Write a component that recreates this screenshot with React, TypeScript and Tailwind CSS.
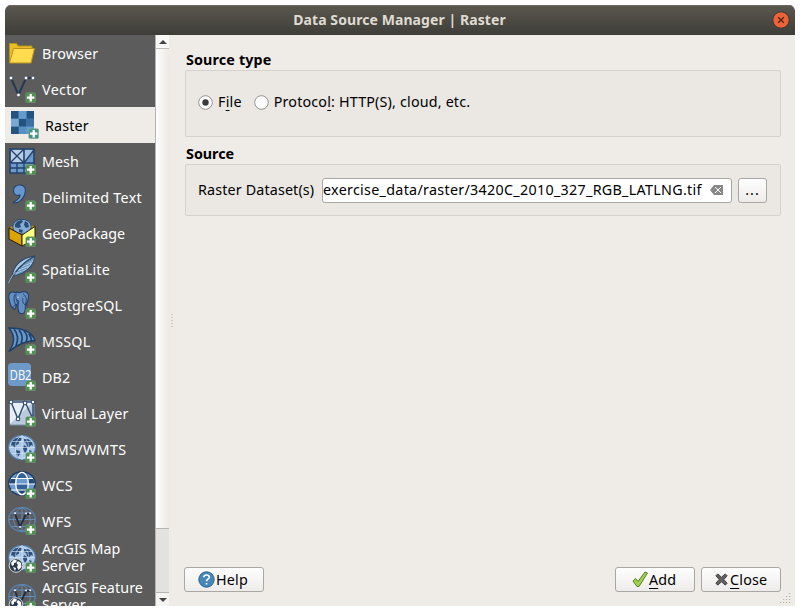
import type { ReactNode } from "react";

const NAVY = "#24426a";
const BLUE = "#6d9ace";
const LIGHT = "#b9cfe8";

function Plus({ fill = "#4f8f50" }: { fill?: string }) {
  return (
    <g>
      <rect x="17.8" y="17.8" width="9.8" height="9.8" rx="1.5" fill={fill} stroke="#76a877" strokeWidth=".5" />
      <path d="M22.7 19v7.4M19 22.7h7.4" stroke="#fff" strokeWidth="2.3" />
    </g>
  );
}

function Icon({ children, plus = true }: { children: ReactNode; plus?: boolean }) {
  return (
    <svg width="28" height="28" viewBox="0 0 28 28" fill="none" className="shrink-0">
      {children}
      {plus && <Plus />}
    </svg>
  );
}

function MapGlobe() {
  return (
    <g>
      <ellipse cx="14" cy="12.5" rx="13.4" ry="12.2" fill="#a9c6e6" stroke="#4e7ba9" strokeWidth="1.2" />
      <path d="M4 6l3-2.500 4-1 3 1-1 2-2 1 0 2-3 2-1 3-2-3-2 0zM16 4l4 0 4 3 1 4-2-1-2 3-2-2-1-3-2-1zM8 15l4 1 0 3-2 3-2-3zM16 10l3 2 0 3-2 3-2-4zM21 15l3 1-2 2z" fill="#2e527d" />
      <path d="M1 12.500h26M4 6.500h20M4 18.500h20M14 0.500v24M14 .5C5 6 5 19 14 24.500M14 .5c9 5.500 9 18.500 0 24" stroke="#dce9f6" strokeWidth=".6" />
    </g>
  );
}

function FeatureGlobe() {
  return (
    <g>
      <ellipse cx="14" cy="12.500" rx="13.2" ry="12" stroke="#557fb0" strokeWidth="1.5" />
      <path d="M1 12.500h26M4 6h20M4 19.500h20M14 0.500v24M14 .5C3 6 3 19 14 24.500M14 .5c11 5.500 11 18.500 0 24" stroke="#648bb9" strokeWidth="1" />
      <path d="M7 7l5 13 6-13h4" stroke="#1e2e46" strokeWidth="1.8" />
      <path d="M7 6.2h.1M12 20h.1M18 6.5h.1M22 6.2h.1" stroke="#e8eef5" strokeWidth="2" strokeLinecap="round" />
    </g>
  );
}

function SmallWorld() {
  return (
    <g>
      <circle cx="8" cy="20.5" r="6.8" fill="#29394e" stroke="#d5d8dc" strokeWidth="1" />
      <path d="M3 18l3-3.500 3 1-1 2-2 .5 0 2-2 1zM10 16l3 2 .5 4-3 3-1.500-3 1-2-1.500-2zM5 22l3 1-1 3z" fill="#fff" />
    </g>
  );
}

const icons = {
  browser: (
    <Icon plus={false}>
      <path d="M1.5 24V4.5h7l1.500 2.500h14V10" fill="#e8bd25" stroke="#b8921c" />
      <path d="M1.5 24L5.5 9.500h21L23 24z" fill="#ffdb4d" stroke="#b8921c" />
    </Icon>
  ),
  vector: (
    <Icon>
      <path d="M3 3l7.500 17L18 3h7" stroke="#253956" strokeWidth="2" />
      {[[3, 3], [10.5, 20], [18, 3], [25, 3]].map(([x, y]) => (
        <circle key={x} cx={x} cy={y} r="1.8" fill="#fff" stroke="#42536b" strokeWidth=".7" />
      ))}
    </Icon>
  ),
  raster: (
    <Icon plus={false}>
      <path d="M0 0h23v23H0z" fill="#5790c3" />
      <path d="M0 0h7.7v7.7H0zM15.400 0H23v7.7h-7.600zM7.700 7.700h7.700v7.700H7.700zM0 15.400h7.700V23H0z" fill="#24537f" />
      <path d="M7.700 0h7.700v7.700H7.700zM15.400 15.400H23V23h-7.600z" fill="#639dd0" />
      <path d="M0 7.700h7.700v7.700H0z" fill="#78a8d3" />
      <path d="M15.400 7.700H23v7.700h-7.600z" fill="#3d6fa0" />
      <Plus fill="#48918a" />
    </Icon>
  ),
  mesh: (
    <Icon>
      <path d="M2 2h24v24H2z" fill={BLUE} stroke={NAVY} strokeWidth="1.6" />
      <path d="M3 3h12v12H3z" fill={LIGHT} />
      <path d="M17 15V3h8z" fill="#a3c0df" />
      <path d="M2 2l14 14M16 2L2 16M16 2v24M2 16h24M2 21h24M9 16v10M16 16L26 3" stroke={NAVY} strokeWidth="1.4" />
    </Icon>
  ),
  comma: (
    <Icon>
      <path d="M5.500 7.500c0-3.500 3-5.500 6-5.500 6 0 7 5 5 10-2 4.500-6 8-10 8-2 0-1-1 1-2 3-2 4.500-4 4.500-6-4 1.500-6.500-1-6.500-4.500z" fill="#6596ce" stroke={NAVY} strokeWidth="1.1" />
    </Icon>
  ),
  geopackage: (
    <Icon>
      <path d="M1 8.500L8 5l6 3 6-3 7 2.500-13 9z" fill="#c79a10" stroke="#6b560b" strokeWidth=".7" />
      <ellipse cx="14" cy="7.700" rx="9.200" ry="7.400" fill="#86acd5" stroke="#284b76" />
      <path d="M7 5l3-3 4-1 1 2-3 2 1 3-3 1-3-1zM17 2l3 2 1 4-3 1-2-3zM11 10l4 1-1 3-3-1z" fill="#294c75" />
      <path d="M1 9l13 7v11L1 20z" fill="#dca400" stroke="#231d0b" />
      <path d="M14 16L27 7.500V20l-13 7z" fill="#ffff83" stroke="#231d0b" />
    </Icon>
  ),
  feather: (
    <Icon>
      <path d="M4 21C6 10 14 3 26.500 1c0 7-5 13-12 17-4 2-7 3-10.500 3z" fill="#a9c8e7" stroke="#284966" strokeWidth="1.1" />
      <path d="M.5 28C6 17 13 9 26 1.500" stroke="#284966" strokeWidth="1.500" />
      <path d="M7 20l9-4M9 17l10-4M12 13.500l10-4M15 10l9-3.500M19 7l6-2.500" stroke="#4e7ba2" strokeWidth=".8" />
      <path d="M.5 28c2.500-5 4-8 7-11" stroke="#c2d4e4" strokeWidth=".8" />
    </Icon>
  ),
  postgres: (
    <Icon>
      <g transform="scale(.83 .9)">
        <path d="M9 2C4-1 0 3 1 8c1 5 3 11 6 12 2 1 3-3 3-5l2 1c0 5 0 8 3 9 4 1 6-1 6-9 2-3 5-9 3-13-2-3-7-3-10-1-2-1-4-1-5 0z" fill="#648fc4" stroke="#24426a" strokeWidth="1.3" />
        <path d="M8 4c-2 4 0 8 1 12M12 15c-1-4-4-8-2-12M20 15c3-3 3-9-2-12M10 10l3 1-1 5M20 15c-3-2-3-6-1-9M4 17c2 2 4 0 5-2M20 15l4 1" stroke="#24426a" strokeWidth="1.1" />
        <path d="M11 7h2M18 7h1" stroke="#c5dcf2" />
      </g>
    </Icon>
  ),
  mssql: (
    <Icon>
      <path d="M1 1c14 0 23 4 26 12.500-9 1-16 3-26 11C7 16 7 8 1 1z" fill="#6796c9" stroke="#20416a" strokeWidth="1.5" />
      <path d="M6 2c5 6 4 12 2 17M11 3c4 5 4 9 2 13M16 4c4 4 4 7 2 11M21 7c2 3 3 5 2 7" stroke="#20416a" strokeWidth="1.7" />
      <path d="M1 24.500c10-8 16-10 26-11" stroke="#20416a" strokeWidth="1.6" />
    </Icon>
  ),
  db2: (
    <Icon>
      <rect width="23" height="23" rx="4" fill="#6d9ac9" />
      <text transform="translate(1.8 16.800) scale(.77 1)" fill="#fff" fontFamily="Open Sans, sans-serif" fontSize="14.5">DB2</text>
    </Icon>
  ),
  virtual: (
    <Icon>
      <path d="M2 2h24v24H2z" fill="#b9cadd" stroke="#7891ac" />
      <path d="M2 2h24L2 25z" fill="#e5edf5" />
      <path d="M3 3l7 17 7-17 8 17M3 3h22v18" stroke="#344f70" strokeWidth="1.500" />
      <path d="M3 3h.1M10 20h.1M17 4h.1M25 3h.1" stroke="#304b69" strokeWidth="4.600" strokeLinecap="round" />
      <path d="M3 3h.1M10 20h.1M17 4h.1M25 3h.1" stroke="#fff" strokeWidth="2.400" strokeLinecap="round" />
    </Icon>
  ),
  wms: <Icon><MapGlobe /></Icon>,
  wcs: (
    <Icon>
      <ellipse cx="14" cy="12.500" rx="13.200" ry="11.700" fill="#6d9acc" stroke="#1f3c60" strokeWidth="1.5" />
      <path d="M9 2h10l2 5H7zM8 13h12l-1 6H9z" fill="#34619a" />
      <path d="M3 7h5l-1 6H1.500zM20 7h5l1.500 6H21zM10 19h8l-4 5z" fill="#244b78" />
      <path d="M3 7.500h22M1 13h26M3 19h22" stroke="#fff" strokeWidth="1.200" />
      <ellipse cx="14" cy="12.500" rx="6.300" ry="11.200" stroke="#fff" strokeWidth="1.300" />
    </Icon>
  ),
  wfs: <Icon><FeatureGlobe /></Icon>,
  arcmap: <Icon><MapGlobe /><SmallWorld /></Icon>,
  arcfeature: <Icon><FeatureGlobe /><SmallWorld /></Icon>,
};

type Source = { label: string; icon: ReactNode; selected?: boolean; tracking: string };

const sources: Source[] = [
  { label: "Browser", icon: icons.browser, tracking: "tracking-[0.15px]" },
  { label: "Vector", icon: icons.vector, tracking: "tracking-[0.35px]" },
  { label: "Raster", icon: icons.raster, selected: true, tracking: "tracking-[0.15px]" },
  { label: "Mesh", icon: icons.mesh, tracking: "tracking-normal" },
  { label: "Delimited Text", icon: icons.comma, tracking: "tracking-[0.27px]" },
  { label: "GeoPackage", icon: icons.geopackage, tracking: "tracking-normal" },
  { label: "SpatiaLite", icon: icons.feather, tracking: "tracking-[0.2px]" },
  { label: "PostgreSQL", icon: icons.postgres, tracking: "tracking-[0.2px]" },
  { label: "MSSQL", icon: icons.mssql, tracking: "tracking-[0.2px]" },
  { label: "DB2", icon: icons.db2, tracking: "tracking-[0.1px]" },
  { label: "Virtual Layer", icon: icons.virtual, tracking: "tracking-[0.17px]" },
  { label: "WMS/WMTS", icon: icons.wms, tracking: "tracking-[0.37px]" },
  { label: "WCS", icon: icons.wcs, tracking: "tracking-[0.3px]" },
  { label: "WFS", icon: icons.wfs, tracking: "tracking-[0.4px]" },
];

const arcSources: Source[] = [
  { label: "ArcGIS Map", icon: icons.arcmap, tracking: "tracking-normal" },
  { label: "ArcGIS Feature", icon: icons.arcfeature, tracking: "tracking-[0.1px]" },
];

function Sidebar() {
  return (
    <nav className="w-[150px] shrink-0 overflow-hidden bg-[#5c5c5c] text-white">
      {sources.map((s) => (
        <div key={s.label} className={s.selected ? "flex h-9 items-center gap-1.5 bg-[#efebe7] pl-1.5 text-black" : "flex h-9 items-center gap-1.5 pl-[3px]"}>
          {s.icon}
          <span className={`whitespace-nowrap pt-0.5 leading-5 ${s.tracking}`}>{s.label}</span>
        </div>
      ))}
      {arcSources.map((s) => (
        <div key={s.label} className="flex h-[39px] items-center gap-1.5 pl-[3px]">
          {s.icon}
          <span className={`whitespace-nowrap pb-1 leading-[17px] ${s.tracking}`}>{s.label}<br />Server</span>
        </div>
      ))}
    </nav>
  );
}

function Scrollbar() {
  return (
    <div className="flex w-3.5 shrink-0 flex-col border-l border-[#b6b3b0] bg-[#e4e2e0]">
      <div className="flex h-3.5 items-center justify-center border-b border-[#bebbb8] bg-[#faf9f8]">
        <svg width="8" height="4"><path d="M4 0l4 4H0z" fill="#444" /></svg>
      </div>
      <div className="h-[480px] border-b border-[#b6b3b0] bg-linear-to-r from-[#fefefe] to-[#ece9e6]" />
      <div className="flex-1" />
      <div className="flex h-3.5 items-center justify-center border-t border-[#b6b3b0] bg-[#f5f4f2]">
        <svg width="8" height="4"><path d="M0 0h8L4 4z" fill="#444" /></svg>
      </div>
    </div>
  );
}

const buttonStyle = "flex items-center rounded-[3px] border border-[#aaa6a2] bg-linear-to-b from-[#fefefe] to-[#eeecea]";

function Mnemonic({ children }: { children: string }) {
  return <span className="underline decoration-1 underline-offset-[3px]">{children}</span>;
}

function ResizeGrip() {
  return (
    <svg width="11" height="11" className="absolute bottom-0.5 right-1">
      <path d="M9 0h1.200M6 3h1.200M9 3h1.200M3 6h1.200M6 6h1.200M9 6h1.200M0 9h1.200M3 9h1.200M6 9h1.200M9 9h1.200" transform="translate(0 .5)" stroke="#b5b1ad" />
    </svg>
  );
}

export default function App() {
  return (
    <div className="h-[615px] w-[804px] bg-white pl-[5px] pt-[5px] font-['Noto_Sans',sans-serif] text-[14.3px] text-black">
      <div className="relative flex h-[601px] w-[790px] flex-col overflow-hidden rounded-t-[6px] bg-[#efebe7]">
        <header className="flex h-[30px] shrink-0 items-center bg-linear-to-b from-[#5b584f] to-[#3e3d38] pl-[22px] pr-[5px] shadow-[inset_0_1px_#6b685e]">
          <h1 className="flex-1 whitespace-nowrap text-center text-[14px] font-bold leading-5 tracking-[0.08px] text-[#dfdbd2]">Data Source Manager | Raster</h1>
          <svg width="18" height="18" viewBox="0 0 18 18" className="shrink-0">
            <circle cx="9" cy="9" r="8.2" fill="#ed6338" stroke="#3d3831" />
            <path d="M6.2 6.2l5.6 5.6M11.8 6.2l-5.6 5.6" stroke="#4b281b" strokeWidth="1.4" />
          </svg>
        </header>
        <div className="flex min-h-0 flex-1">
          <Sidebar />
          <Scrollbar />
          <div className="flex w-[5px] shrink-0 items-center justify-center">
            <svg width="2" height="16"><path d="M1 1v15" stroke="#aaa7a3" strokeDasharray="1 2" /></svg>
          </div>
          <main className="flex min-w-0 flex-1 flex-col pl-[11px]">
            <h2 className="mt-[15px] h-5 whitespace-nowrap pl-px font-bold leading-5 tracking-[0.15px]">Source type</h2>
            <section className="flex h-[67px] w-[596px] items-center rounded-xs border border-[#d5d1cd] bg-[#ebe7e3] pb-[3px] pl-3">
              <svg width="15" height="15" viewBox="0 0 15 15"><circle cx="7.5" cy="7.5" r="6.8" fill="#fff" stroke="#96928e" /><circle cx="7.5" cy="7.5" r="3.2" fill="#3c3c3c" /></svg>
              <span className="ml-[5px] whitespace-nowrap leading-5 tracking-[0.2px]">F<Mnemonic>i</Mnemonic>le</span>
              <svg width="15" height="15" viewBox="0 0 15 15" className="ml-3"><circle cx="7.5" cy="7.5" r="6.8" fill="#fff" stroke="#96928e" /></svg>
              <span className="ml-[5px] whitespace-nowrap leading-5 tracking-[0.18px]">Protoco<Mnemonic>l</Mnemonic>: HTTP(S), cloud, etc.</span>
            </section>
            <h2 className="mt-[7px] h-5 whitespace-nowrap pl-px font-bold leading-5">Source</h2>
            <section className="flex h-[52px] w-[596px] items-center rounded-xs border border-[#d5d1cd] bg-[#ebe7e3] pl-3">
              <span className="w-[124px] shrink-0 whitespace-nowrap leading-5 tracking-[0.15px]">Raster Dataset(s)</span>
              <div className="flex h-[25px] w-[410px] shrink-0 items-center rounded-[3px] border border-[#aaa6a2] bg-white">
                <span className="w-[387px] whitespace-nowrap leading-5 tracking-[0.3px]">exercise_data/raster/3420C_2010_327_RGB_LATLNG.tif</span>
                <svg width="14" height="10" viewBox="0 0 14 10"><path d="M4 0h9v10H4L0 5z" fill="#888" /><path d="M5 2l6 6M11 2L5 8" stroke="#fff" /></svg>
              </div>
              <button className={`${buttonStyle} ml-1.5 h-[25px] w-[29px] justify-center tracking-[1px]`}>...</button>
            </section>
            <footer className="mb-3.5 mt-auto flex h-[25px] items-center gap-1.5 pr-3.5">
              <button className={`${buttonStyle} -ml-px mr-auto h-[25px] w-20 pl-[13px]`}>
                <svg width="17" height="17" viewBox="0 0 17 17" className="shrink-0"><circle cx="8.5" cy="8.5" r="7.7" fill="#4587bb" stroke="#285e8b" /><path d="M5.8 6.2c0-3 5.5-3 5.5 0 0 2-2.8 2-2.8 4M8.5 12v1.5" fill="none" stroke="#fff" strokeWidth="1.6" /></svg>
                <span className="pl-px tracking-[0.2px]">Help</span>
              </button>
              <button className={`${buttonStyle} h-[25px] w-20 pl-4`}>
                <svg width="17" height="17" viewBox="0 0 17 17" className="shrink-0"><path d="M1 10l2.5-2.5L6 10.5 13 1l2.5 1L7 15.5H5z" fill="#a1d24e" stroke="#557d24" strokeLinejoin="round" /></svg>
                <span className="tracking-[0.1px]"><Mnemonic>A</Mnemonic>dd</span>
              </button>
              <button className={`${buttonStyle} h-[25px] w-20 pl-3`}>
                <svg width="15" height="15" viewBox="0 0 16 16" className="shrink-0"><path d="M4 2l4 3.500L12 2l2 2-3.500 4 3.500 4-2 2-4-3.500L4 14l-2-2 3.500-4L2 4z" fill="#606060" stroke="#3f3f3f" strokeLinejoin="round" /></svg>
                <span className="pl-px tracking-[0.2px]"><Mnemonic>C</Mnemonic>lose</span>
              </button>
            </footer>
          </main>
        </div>
        <ResizeGrip />
      </div>
    </div>
  );
}
